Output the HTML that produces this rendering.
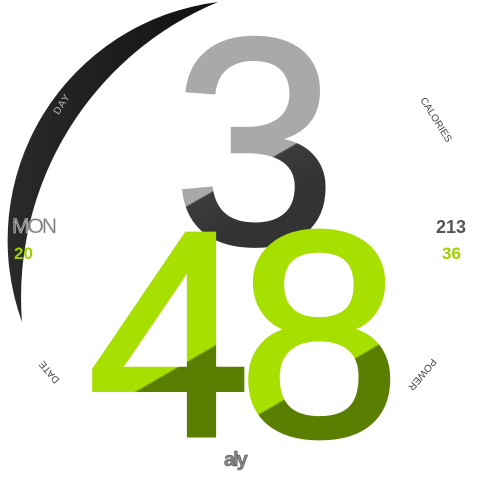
<!DOCTYPE html>
<html><head><meta charset="utf-8"><style>
html,body{margin:0;padding:0;background:#fff;width:480px;height:480px;overflow:hidden}
</style></head><body>
<svg width="480" height="480" viewBox="0 0 480 480" xmlns="http://www.w3.org/2000/svg">
<defs>
<linearGradient id="g3" gradientUnits="userSpaceOnUse" x1="190" y1="158" x2="230" y2="228">
<stop offset="0.49" stop-color="#a9a9a9"/><stop offset="0.51" stop-color="#3c3c3c"/><stop offset="1" stop-color="#333"/></linearGradient>
<linearGradient id="g4" gradientUnits="userSpaceOnUse" x1="155" y1="323" x2="205" y2="409">
<stop offset="0.49" stop-color="#a6df00"/><stop offset="0.51" stop-color="#5a7e00"/><stop offset="1" stop-color="#5a7e00"/></linearGradient>
<linearGradient id="g8" gradientUnits="userSpaceOnUse" x1="300" y1="333" x2="350" y2="419">
<stop offset="0.49" stop-color="#a6df00"/><stop offset="0.51" stop-color="#5a7e00"/><stop offset="1" stop-color="#5a7e00"/></linearGradient>
<linearGradient id="arc" x1="0" y1="0" x2="1" y2="0"><stop offset="0" stop-color="#2a2a2a"/><stop offset="1" stop-color="#111"/></linearGradient>
</defs>
<path d="M218,2 A240,240 0 0 0 22,322 A320,320 0 0 1 218,2 Z" fill="url(#arc)"/>
<text x="50" y="120" transform="rotate(-58 50 110)" font-family="Liberation Sans, sans-serif" font-size="10" fill="#bbb" letter-spacing="1">DAY</text>
<text x="173" y="243" font-family="Liberation Sans, sans-serif" font-size="294" fill="url(#g3)" stroke="url(#g3)" stroke-width="4">3</text>
<text x="88" y="435" font-family="Liberation Sans, sans-serif" font-size="292" fill="url(#g4)" stroke="url(#g4)" stroke-width="5">4</text>
<text x="238" y="435" font-family="Liberation Sans, sans-serif" font-size="292" fill="url(#g8)" stroke="url(#g8)" stroke-width="5">8</text>
<text x="12" y="233" font-family="Liberation Sans, sans-serif" font-size="21" fill="#777" stroke="#ccc" stroke-width="0.5" letter-spacing="-2">MON</text>
<text x="14" y="259" font-family="Liberation Sans, sans-serif" font-size="17" font-weight="bold" fill="#9ed000">20</text>
<text x="436" y="233" font-family="Liberation Sans, sans-serif" font-size="18" font-weight="bold" fill="#555">213</text>
<text x="442" y="259" font-family="Liberation Sans, sans-serif" font-size="17" font-weight="bold" fill="#9ed000">36</text>
<text x="420" y="100" transform="rotate(58 420 100)" font-family="Liberation Sans, sans-serif" font-size="10" fill="#444">CALORIES</text>
<text x="432" y="358" transform="rotate(130 432 358)" font-family="Liberation Sans, sans-serif" font-size="10" fill="#444">POWER</text>
<text x="60" y="380" transform="rotate(-130 60 380)" font-family="Liberation Sans, sans-serif" font-size="10" fill="#444">DATE</text>
<text x="224" y="466" font-family="Liberation Sans, sans-serif" font-size="20" font-weight="bold" fill="#888" stroke="#555" stroke-width="0.6" letter-spacing="-2">aly</text>
</svg>
</body></html>
